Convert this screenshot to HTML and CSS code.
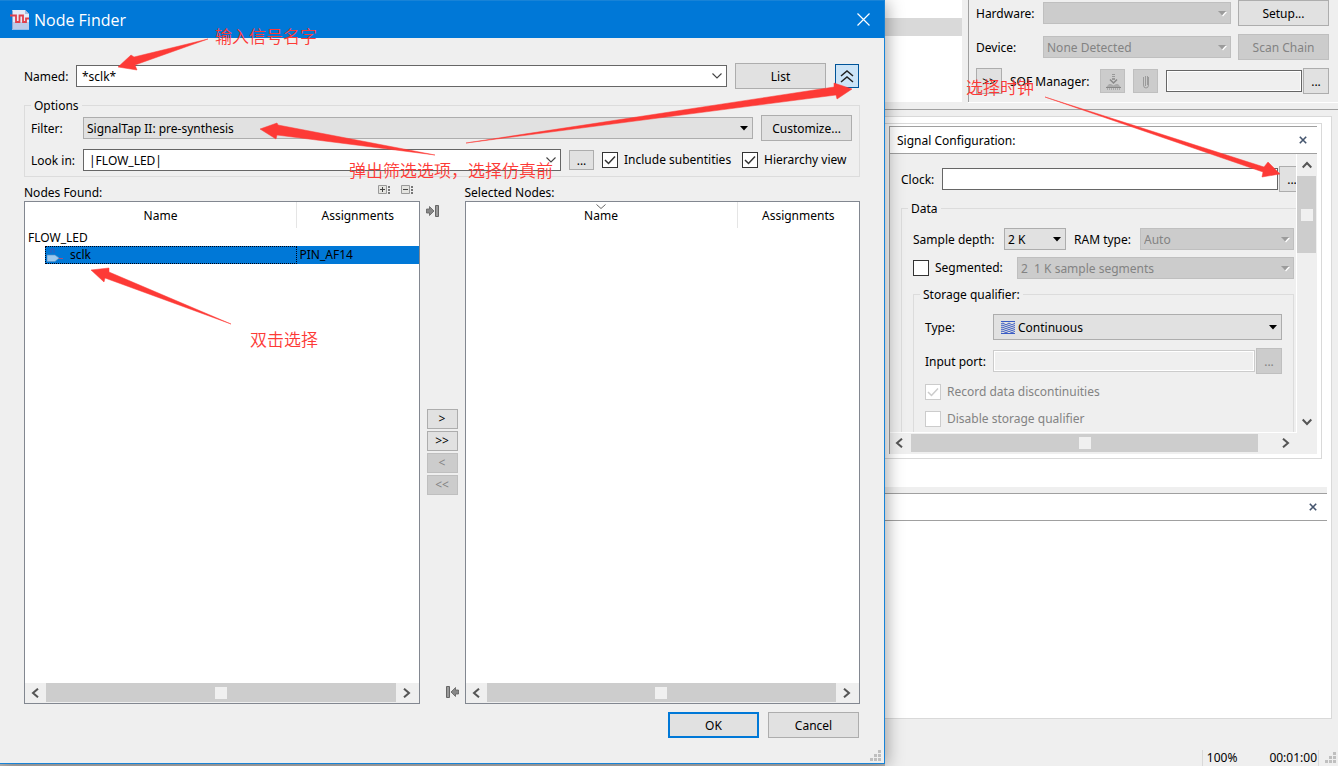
FILE: index.html
```html
<!DOCTYPE html>
<html lang="en">
<head>
<meta charset="utf-8">
<title>Node Finder</title>
<link rel="stylesheet" href="styles.css">
</head>
<body>
<svg class="defs" aria-hidden="true">
  <symbol id="tri" viewBox="0 0 8 5"><path d="M0 0h8L4 4.500z"/></symbol>
  <symbol id="chev" viewBox="0 0 12 8"><path d="M1.500 1.500 6 6l4.500-4.500" fill="none" stroke="#444" stroke-width="1.100"/></symbol>
  <symbol id="left" viewBox="0 0 8 10"><path d="M7 .7 2 5l5 4.300" fill="none" stroke="#555" stroke-width="2"/></symbol>
  <symbol id="right" viewBox="0 0 8 10"><path d="M1 .7 6 5 1 9.300" fill="none" stroke="#555" stroke-width="2"/></symbol>
  <symbol id="up" viewBox="0 0 10 8"><path d="M.7 6.500 5 2l4.300 4.500" fill="none" stroke="#555" stroke-width="2"/></symbol>
  <symbol id="down" viewBox="0 0 10 8"><path d="M.7 1.500 5 6l4.300-4.500" fill="none" stroke="#555" stroke-width="2"/></symbol>
  <symbol id="close" viewBox="0 0 8 8"><path d="M.8.8l6.400 6.400M7.200.8.8 7.200" fill="none" stroke="#45556e" stroke-width="1.600"/></symbol>
  <symbol id="grip" viewBox="0 0 11 11"><path d="M8 0h3v3H8zM4 4h3v3H4zM8 4h3v3H8zM0 8h3v3H0zM4 8h3v3H4zM8 8h3v3H8z" fill="#bfbfbf"/></symbol>
</svg>
<div class="desktop">
  <section class="dialog" role="dialog" aria-labelledby="dlg-title">
    <header class="titlebar">
      <svg class="app-icon" width="20" height="20" viewBox="0 0 20 20">
        <path d="M2 0h13l4 4v15.500H2z" fill="#e4ebf7"/><path d="M2 12h17v7.500H2z" fill="#bccbe8"/>
        <path d="M15 0v4h4z" fill="#a9bde0"/><path d="M2.500 19V.5" stroke="#8fa6cf" fill="none"/>
        <path d="M0 5.500h6V12h3.500V5.500H13V12h3V8.500h3" fill="none" stroke="#e0404c" stroke-width="1.800"/>
      </svg>
      <h1 id="dlg-title">Node Finder</h1>
      <button class="win-close" aria-label="Close"><svg width="13" height="13" viewBox="0 0 13 13"><path d="M.5.5l12 12M12.500.5l-12 12" stroke="#fff" fill="none" stroke-width="1.200"/></svg></button>
    </header>
    <div class="dialog-body">
      <div class="row named-row">
        <label for="named">Named:</label>
        <div class="combo grow"><input id="named" type="text" value="*sclk*"><button aria-label="Show names"><svg width="12" height="8"><use href="#chev"/></svg></button></div>
        <button class="btn wide">List</button>
        <button class="toggle" aria-label="Hide options"><svg width="16" height="14" viewBox="0 0 16 14"><path d="M2 7l6-5 6 5M2 13l6-5 6 5" fill="none" stroke="#222" stroke-width="1.500"/></svg></button>
      </div>
      <fieldset class="group options">
        <legend>Options</legend>
        <div class="row">
          <label class="opt-label" for="filter">Filter:</label>
          <div class="select grow"><select id="filter"><option>SignalTap II: pre-synthesis</option></select><svg width="8" height="5"><use href="#tri"/></svg></div>
          <button class="btn wide">Customize...</button>
        </div>
        <div class="row look-row">
          <label class="opt-label" for="look">Look in:</label>
          <div class="combo grow"><input id="look" type="text" value="|FLOW_LED|"><button aria-label="Show paths"><svg width="12" height="8"><use href="#chev"/></svg></button></div>
          <button class="btn dots">...</button>
          <label class="check sub"><input type="checkbox" checked>Include subentities</label>
          <label class="check hier"><input type="checkbox" checked>Hierarchy view</label>
        </div>
      </fieldset>
      <div class="lists">
        <div class="caption"><span>Nodes Found:</span>
          <span class="tree-tools">
            <button aria-label="Expand all"><svg width="13" height="10" viewBox="0 0 13 10"><path d="M.5.5h8v8h-8z" fill="#e4e4e0" stroke="#999"/><path d="M2 4.500h5M4.500 2v5" stroke="#444"/><path d="M10 1h2v2h-2zM10 4h2v2h-2zM10 7h2v2h-2z" fill="#777"/></svg></button>
            <button aria-label="Collapse all"><svg width="13" height="10" viewBox="0 0 13 10"><path d="M.5.5h8v8h-8z" fill="#e4e4e0" stroke="#999"/><path d="M2 4.500h5" stroke="#444"/><path d="M10 1h2v2h-2zM10 4h2v2h-2zM10 7h2v2h-2z" fill="#777"/></svg></button>
          </span>
        </div>
        <div></div>
        <div class="caption"><span>Selected Nodes:</span></div>
        <div class="list">
          <table>
            <thead><tr><th class="c-name">Name</th><th>Assignments</th></tr></thead>
            <tbody>
              <tr><td colspan="2" class="root">FLOW_LED</td></tr>
              <tr class="selected"><td><div class="node"><svg width="18" height="16" viewBox="0 0 18 16"><path d="M4 6V2h3v4" fill="none" stroke="#3b58b8"/><path d="M11 11.500h5" stroke="#a05080"/><path d="M0 8h8l4 3-4 3.500H0z" fill="#9cc9ee" stroke="#5e8fc0" stroke-width=".6"/></svg><span>sclk</span></div></td><td class="pin">PIN_AF14</td></tr>
            </tbody>
          </table>
          <div class="hbar"><svg width="8" height="10"><use href="#left"/></svg><i class="thumb"></i><svg width="8" height="10"><use href="#right"/></svg></div>
        </div>
        <div class="movers">
          <button class="dock" aria-label="Dock right"><svg width="13" height="12" viewBox="0 0 13 12"><path d="M.5 4h3V1.500L8 6l-4.500 4.500V8h-3z" fill="#888" stroke="#606060" stroke-width=".8"/><path d="M9.500.5h3v11h-3z" fill="#999" stroke="#666"/></svg></button>
          <div class="move-buttons">
            <button class="btn">&gt;</button><button class="btn">&gt;&gt;</button><button class="btn" disabled>&lt;</button><button class="btn" disabled>&lt;&lt;</button>
          </div>
          <button class="dock end" aria-label="Dock left"><svg width="13" height="12" viewBox="0 0 13 12"><path d="M12.500 4h-3V1.500L5 6l4.500 4.500V8h3z" fill="#888" stroke="#606060" stroke-width=".8"/><path d="M.5.500h3v11h-3z" fill="#999" stroke="#666"/></svg></button>
        </div>
        <div class="list">
          <table><thead><tr><th class="c-name sorted"><svg width="10" height="5" viewBox="0 0 10 5"><path d="M.5.500 5 4.500 9.500.5" fill="none" stroke="#666"/></svg>Name</th><th>Assignments</th></tr></thead></table>
          <div class="hbar"><svg width="8" height="10"><use href="#left"/></svg><i class="thumb"></i><svg width="8" height="10"><use href="#right"/></svg></div>
        </div>
      </div>
      <footer class="actions"><button class="btn wide primary">OK</button><button class="btn wide">Cancel</button></footer>
    </div>
    <svg class="grip" width="11" height="11"><use href="#grip"/></svg>
  </section>

  <main class="workspace">
    <div class="top">
      <div class="instances"><div class="instance"></div></div>
      <div class="jtag">
        <div class="row"><label class="j-label" for="hw">Hardware:</label><div class="select grow"><select id="hw" disabled></select><svg width="8" height="5"><use href="#tri"/></svg></div><button class="btn wide">Setup...</button></div>
        <div class="row"><label class="j-label" for="dev">Device:</label><div class="select grow"><select id="dev" disabled><option>None Detected</option></select><svg width="8" height="5"><use href="#tri"/></svg></div><button class="btn wide" disabled>Scan Chain</button></div>
        <div class="row sof"><button class="btn tall">&gt;&gt;</button><label for="sof">SOF Manager:</label>
          <button class="btn icon" disabled aria-label="Program device"><svg width="16" height="16" viewBox="0 0 16 16"><path d="M7 0h3v1H7zM7 2h3v1H7zM7 4h3v2H7z" fill="#999"/><path d="M5 5.500l3.500 3.500L12 5.500" fill="none" stroke="#888" stroke-width="1.500"/><path d="M4 10h2l2.500 1.500L11 10h2l3 3.500H1z" fill="#aaa"/><path d="M1 13.500h15" stroke="#888"/><path d="M2 15h13" stroke="#888" stroke-dasharray="1 1"/></svg></button>
          <button class="btn icon" disabled aria-label="Attach file"><svg width="12" height="16" viewBox="0 0 12 16"><path d="M3.500 3v8a2.500 3 0 0 0 5 0V3M5.500 12V2M7.500 11V2" fill="none" stroke="#959595" stroke-width=".9"/></svg></button>
          <input id="sof" class="field grow" type="text" disabled><button class="btn tall more">...</button></div>
      </div>
    </div>
    <div class="pane">
      <div class="config-frame">
        <section class="config">
          <header class="pane-head"><h2>Signal Configuration:</h2><button aria-label="Close panel"><svg width="8" height="8"><use href="#close"/></svg></button></header>
          <div class="scroll-area">
            <div class="viewport"><div class="form">
              <div class="row clock-row"><label for="clock">Clock:</label><input id="clock" class="field grow" type="text"><button class="btn tall">...</button></div>
              <fieldset class="group data">
                <legend>Data</legend>
                <div class="row"><label class="d-label" for="depth">Sample depth:</label><div class="select depth"><select id="depth"><option>2 K</option></select><svg width="8" height="5"><use href="#tri"/></svg></div><label class="r-label" for="ram">RAM type:</label><div class="select grow"><select id="ram" disabled><option>Auto</option></select><svg width="8" height="5"><use href="#tri"/></svg></div></div>
                <div class="row seg-row"><label class="check seg-label"><input type="checkbox">Segmented:</label><div class="select grow"><select disabled aria-label="Segments"><option>2&nbsp; 1 K sample segments</option></select><svg width="8" height="5"><use href="#tri"/></svg></div></div>
                <fieldset class="group storage">
                  <legend>Storage qualifier:</legend>
                  <div class="row"><label class="s-label" for="type">Type:</label><div class="select grow big"><svg class="mode" width="14" height="13" viewBox="0 0 14 13"><path d="M0 .5h14M0 12.500h14M0 3l2-1 3 2 3-2 3 2 3-2M0 5l2-1 3 2 3-2 3 2 3-2M0 7l2-1 3 2 3-2 3 2 3-2M0 9l2-1 3 2 3-2 3 2 3-2M0 11l2-1 3 2 3-2 3 2 3-2" fill="none" stroke="#3a5cc4"/></svg><select id="type"><option>Continuous</option></select><svg width="8" height="5"><use href="#tri"/></svg></div></div>
                  <div class="row port-row"><label class="s-label" for="port">Input port:</label><input id="port" class="field grow" type="text" disabled><button class="btn tall" disabled>...</button></div>
                  <label class="check off"><input type="checkbox" checked disabled>Record data discontinuities</label>
                  <label class="check off"><input type="checkbox" disabled>Disable storage qualifier</label>
                </fieldset>
              </fieldset>
            </div></div>
            <div class="vbar"><svg width="10" height="8"><use href="#up"/></svg><i class="thumb"></i><svg width="10" height="8"><use href="#down"/></svg></div>
            <div class="hbar"><svg width="8" height="10"><use href="#left"/></svg><i class="thumb"></i><svg width="8" height="10"><use href="#right"/></svg></div>
          </div>
        </section>
      </div>
      <section class="log"><header class="pane-head"><button aria-label="Close log"><svg width="8" height="8"><use href="#close"/></svg></button></header></section>
    </div>
    <footer class="status"><span>100%</span><span>00:01:00</span><svg width="11" height="11"><use href="#grip"/></svg></footer>
  </main>

  <div class="notes">
    <svg width="1338" height="766" viewBox="0 0 1338 766" fill="#fd3a36" stroke="#fd3a36" stroke-width=".5">
      <path d="M208 39 134 57l-3-2-13 12 19 3-2-5z"/>
      <path d="M435 155 278 125l-1-2-17 6 16 10 1-4z"/>
      <path d="M466 143 834 87l0-4 18 6-15 10-1-4z"/>
      <path d="M231 324 109 272v-4l-18 2 13 12 1-4z"/>
      <path d="M1045 97 1264 167l4-5 12 12-18 3 1-5z"/>
    </svg>
    <p class="note n-name">输入信号名字</p>
    <p class="note n-filter">弹出筛选选项，选择仿真前</p>
    <p class="note n-pick">双击选择</p>
    <p class="note n-clock">选择时钟</p>
  </div>
</div>
</body>
</html>
```
FILE: styles.css
```css
* { box-sizing: border-box; }
body { margin: 0; background: #efefef; color: #000; font: 12px/16px "Noto Sans", "Noto Sans CJK SC", sans-serif; }
button, input, select { font: inherit; color: inherit; margin: 0; }
button { padding: 0; border: 0; background: none; display: flex; align-items: center; justify-content: center; flex: none; }
h1, h2, p { margin: 0; font-weight: 400; }
label, legend, .caption { white-space: nowrap; }
svg { display: block; flex: none; }
.defs { position: absolute; width: 0; height: 0; }

.desktop { position: relative; min-height: 100vh; display: grid; grid-template-columns: minmax(0, 885fr) minmax(0, 453fr); overflow: hidden; background: #b8b8b8; }

/* shared controls */
.row { display: flex; align-items: center; gap: 8px; }
.row > label, .caption > span:first-child, .pane-head h2 { padding-top: 1px; }
.grow { flex: 1 1 0; min-width: 0; }
.btn { height: 26px; border: 1px solid #adadad; background: #e1e1e1; padding-top: 1px; }
.btn:disabled { background: #ccc; border-color: #bfbfbf; color: #838383; }
.wide { width: 91px; }
.tall { width: 26px; }
.primary { border: 2px solid #0078d7; }
.combo { display: flex; height: 22px; border: 1px solid #666; background: #fff; }
.combo input { flex: 1; min-width: 0; border: 0; padding: 1px 5px 0; background: none; }
.combo button { width: 18px; }
.field { height: 22px; border: 1px solid #666; background: #fff; }
.field:disabled { background: #efefef; border-color: #ccc; box-shadow: inset 0 0 0 1px #fff; }
.select { position: relative; height: 22px; }
.select select { appearance: none; display: block; width: 100%; height: 100%; border: 1px solid #adadad; border-radius: 0; background: #e1e1e1; padding: 1px 3px 0; opacity: 1; }
.select select:disabled { background: #ccc; border-color: #bfbfbf; color: #838383; }
.select > svg { position: absolute; right: 5px; top: 50%; margin-top: -2px; pointer-events: none; }
.select:has(:disabled) > svg { fill: #9b9b9b; filter: drop-shadow(1px 1px 0 #fff); }
.group { margin: 0; min-width: 0; border: 1px solid #dcdcdc; padding: 0; }
.group legend { padding: 1px 3px 0; height: 16px; }
.check { display: flex; align-items: center; gap: 6px; height: 16px; }
.row > .check { padding-top: 0; }
.check input { appearance: none; width: 16px; height: 16px; border: 1px solid #333; background: #fff; flex: none; }
.check input:checked { background: #fff url("data:image/svg+xml,%3Csvg xmlns='http://www.w3.org/2000/svg' viewBox='0 0 14 14'%3E%3Cpath d='M2 7l3.500 3.500L12 3.500' fill='none' stroke='%23333' stroke-width='1.500'/%3E%3C/svg%3E"); }
.check.off { color: #838383; }
.check.off input { border-color: #ccc; }
.check.off input:checked { background: #fff url("data:image/svg+xml,%3Csvg xmlns='http://www.w3.org/2000/svg' viewBox='0 0 14 14'%3E%3Cpath d='M2 7l3.500 3.500L12 3.500' fill='none' stroke='%23ccc' stroke-width='1.500'/%3E%3C/svg%3E"); }
.hbar { display: flex; align-items: center; height: 20px; background: #efefef; padding: 0 7px 0 6px; gap: 7px; }
.thumb { position: relative; flex: 1; align-self: stretch; background: #cdcdcd; }
.thumb::after { content: ""; position: absolute; left: 50%; top: 50%; width: 12px; height: 12px; margin: -6px; background: #f0f0f0; }

/* dialog */
.dialog { position: relative; z-index: 1; display: flex; flex-direction: column; margin-bottom: 2px; border: solid #1883d7; border-width: 0 1px 1px 0; background: #efefef; box-shadow: 2px 2px 16px rgba(0, 0, 0, .35); }
.titlebar { display: flex; align-items: center; height: 38px; background: #0078d7; border-top: 1px solid #1883d7; color: #fff; padding: 0 14px 0 10px; }
.titlebar h1 { flex: 1; margin-left: 4px; font: 16px/20px "Open Sans", sans-serif; }
.dialog-body { flex: 1; display: flex; flex-direction: column; padding: 25px 24px; }
.named-row { height: 26px; padding-right: 1px; }
.named-row label { width: 44px; }
.toggle { width: 24px; height: 24px; margin-left: 1px; border: 1px solid #005499; background: #cce4f7; }
.options { margin-top: 8px; padding: 2px 7px 5px 6px; }
.opt-label { width: 44px; }
.look-row { margin-top: 8px; height: 22px; }
.sub { width: 132px; }
.hier { width: 110px; }
.dots { width: 25px; height: 20px; }
.lists { flex: 1; display: grid; grid-template: 24px 1fr / minmax(0, 1fr) 45px minmax(0, 1fr); }
.caption { display: flex; align-items: flex-end; justify-content: space-between; }
.tree-tools { display: flex; gap: 10px; padding: 0 6px 6px 0; }
.list { display: flex; flex-direction: column; justify-content: space-between; border: 1px solid #828790; background: #fff; }
.list .hbar { padding-right: 8px; border-bottom: 1px solid #efefef; }
table { width: 100%; border-collapse: collapse; table-layout: fixed; }
th, td { padding: 0; font-weight: 400; height: 18px; text-align: left; }
th { height: 26px; padding-top: 1px; text-align: center; }
.c-name { width: 69%; border-right: 1px solid #e5e5e5; }
.sorted { position: relative; }
.sorted svg { position: absolute; top: 2px; left: 50%; margin-left: -5px; }
.root { padding: 1px 0 0 3px; }
.node { display: flex; align-items: center; gap: 5px; height: 18px; margin-left: 20px; padding-left: 2px; background: #0078d7; outline: 1px dotted #001; outline-offset: -1px; }
.pin { background: #0078d7; padding-left: 3px; }
.movers { display: flex; flex-direction: column; align-items: center; justify-content: space-between; padding: 4px 6px 6px; }
.dock { align-self: flex-start; }
.dock.end { align-self: flex-end; }
.move-buttons { display: flex; flex-direction: column; gap: 2px; }
.move-buttons .btn { width: 31px; height: 20px; }
.actions { display: flex; justify-content: flex-end; gap: 9px; padding: 8px 1px 0 0; }
.grip { position: absolute; right: 3px; bottom: 2px; }

/* main window */
.workspace { display: flex; flex-direction: column; min-width: 0; background: #efefef; }
.top { display: flex; height: 110px; padding-bottom: 7px; border-bottom: 1px solid #a0a0a0; }
.instances { flex: 0 0 77px; margin-right: 6px; background: #fff; padding-top: 18px; }
.instance { height: 18px; background: #d9d9d9; }
.jtag { flex: 1; min-width: 0; display: flex; flex-direction: column; gap: 8px; border: solid #a0a0a0; border-width: 0 0 0 1px; box-shadow: 0 1px #fff; padding: 0 9px 0 7px; }
.j-label { width: 59px; }
.jtag .select { margin-right: -1px; }
.sof label { width: 82px; }
.sof > .icon { width: 25px; height: 24px; }
.sof .field { border-color: #666; }
.sof .more { margin-left: -7px; }
.pane { flex: 1; display: flex; flex-direction: column; margin: 6px 6px 0 0; padding-top: 6px; border: solid #d9d9d9; border-width: 1px 1px 1px 0; background: #fff; }
.config-frame { margin-right: 9px; padding: 2px 4px 4px; border: solid #d9d9d9; border-width: 1px 1px 1px 0; }
.config { border: solid #a0a0a0; border-width: 1px 0 0 1px; }
.pane-head { display: flex; align-items: center; height: 27px; border-bottom: 1px solid #a0a0a0; background: #fff; padding: 0 10px 0 7px; }
.pane-head h2 { font-size: 12px; line-height: 16px; }
.pane-head button { margin-left: auto; }
.scroll-area { display: grid; grid-template: 279px 21px / minmax(0, 1fr) 20px; background: #efefef; }
.viewport { overflow: hidden; border: solid #fff; border-width: 0 1px 1px 0; }
.form { width: calc(100% + 9px); padding: 12px 0 0 11px; }
.clock-row { gap: 1px; }
.clock-row label { width: 40px; }
.data { margin-top: 8px; padding: 12px 10px 12px 11px; }
.data legend { margin-left: -5px; }
.data > .row { gap: 8px; }
.d-label { width: 83px; }
.data .r-label { width: 58px; }
.depth { width: 62px; }
.data .seg-row { margin-top: 7px; }
.seg-label { width: 96px; }
.storage { margin-top: 7px; padding: 12px 11px; }
.storage .row { gap: 0; }
.s-label { width: 68px; }
.select.big { height: 26px; }
.big select { padding-left: 24px; }
.select > .mode { left: 8px; right: auto; margin-top: -6px; }
.storage .port-row { margin: 8px 0 10px; gap: 1px; }
.port-row .s-label { width: 67px; }
.storage .check { margin-bottom: 11px; }
.vbar { display: flex; flex-direction: column; align-items: center; gap: 7px; padding: 7px 1px 7px 0; }
.vbar .thumb { flex: 0 0 77px; width: 19px; margin: 0 auto; }
.vbar svg:last-child { margin-top: auto; }
.scroll-area > .hbar { padding: 1px 7px 2px 5px; height: 21px; gap: 8px; }
.scroll-area > .hbar svg:last-child { margin-left: 16px; }
.log { flex: 1; margin: 28px 4px 0 0; border-top: 6px solid #efefef; }
.log .pane-head { height: 28px; border-top: 1px solid #a0a0a0; }
.status { display: flex; justify-content: flex-end; align-items: center; gap: 32px; height: 47px; padding: 30px 2px 0 0; }
.status span:first-child { border-left: 1px solid #d9d9d9; padding-left: 4px; }
.status span:nth-child(2) { border-right: 1px solid #d9d9d9; padding-right: 1px; }
.status svg { margin-left: -26px; }

/* annotations pinned over the desktop */
.notes { position: absolute; inset: 0; z-index: 2; pointer-events: none; }
.note { position: absolute; color: #fd3a36; font: 350 17px/20px "Noto Sans CJK SC", sans-serif; white-space: nowrap; }
.n-name { left: 215px; top: 26px; }
.n-filter { left: 349px; top: 160px; }
.n-pick { left: 250px; top: 329px; }
.n-clock { left: 966px; top: 77px; }
```
